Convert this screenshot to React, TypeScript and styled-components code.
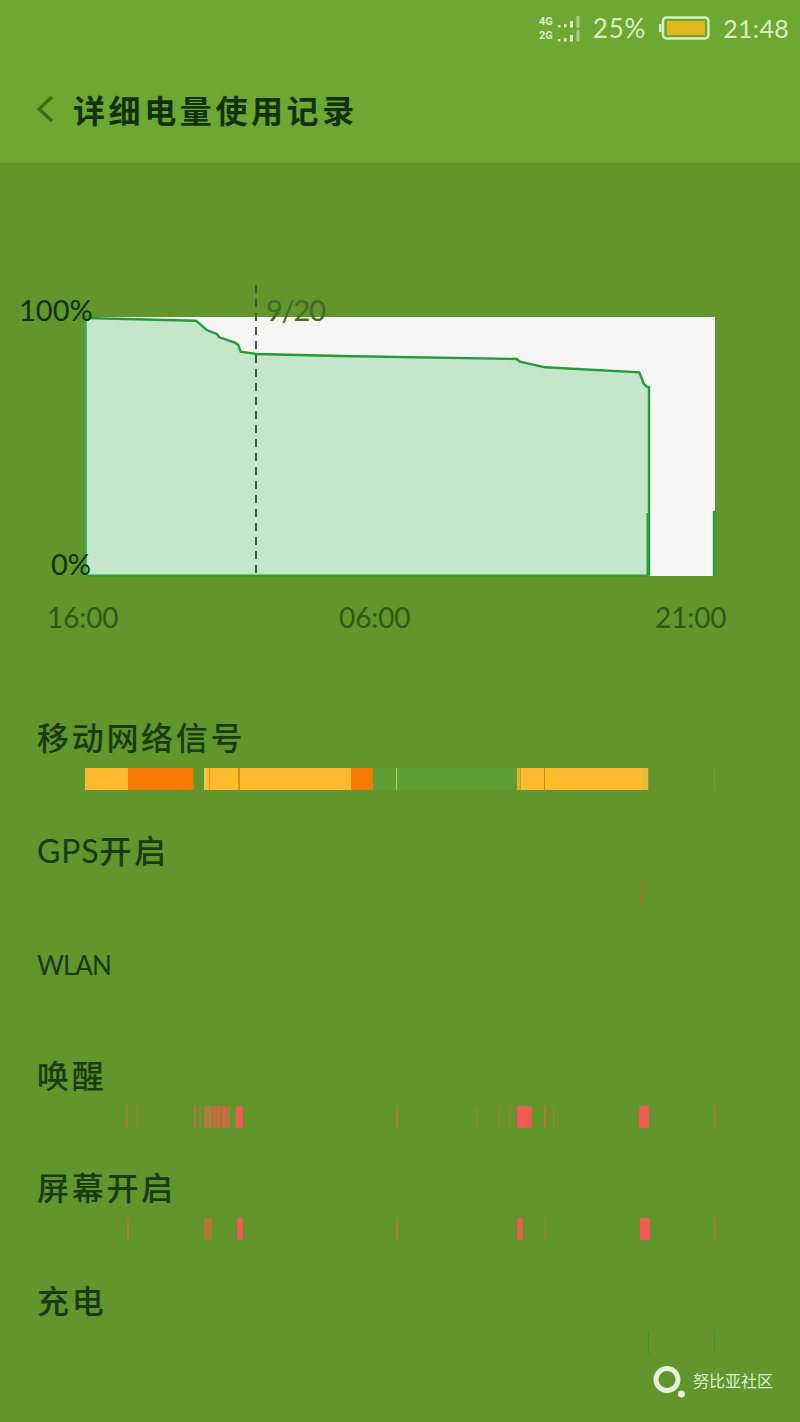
import React from 'react';
import styled, { createGlobalStyle } from 'styled-components';

const latin = '"Lato", "Noto Sans CJK SC", sans-serif';

const GlobalStyle = createGlobalStyle`
  html, body {
    margin: 0;
    padding: 0;
    background: #62952b;
  }
`;

const Page = styled.div`
  position: relative;
  width: 800px;
  height: 1422px;
  overflow: hidden;
  background: #62952b;
  font-family: ${latin};
`;

const Header = styled.header`
  height: 162px;
  background: #6ca832;
  border-bottom: 1px solid #669f2f;
  display: flex;
  flex-direction: column;
`;

const StatusBar = styled.div`
  height: 56px;
  display: flex;
  align-items: center;
  justify-content: flex-end;
  padding-right: 11px;
  color: #d9f0c2;
`;

const NetStack = styled.div`
  display: flex;
  flex-direction: column;
  gap: 1px;
  margin-right: 13px;
`;

const NetRow = styled.div`
  display: flex;
  align-items: flex-end;
  gap: 5px;
  height: 13px;
  font-size: 11px;
  font-weight: 700;
  line-height: 13px;
  font-family: "Roboto", sans-serif;
`;

const Percent = styled.span`
  font-size: 26px;
  letter-spacing: 0.8px;
  margin-right: 13px;
`;

const Clock = styled.span`
  font-size: 25px;
  letter-spacing: 0.3px;
`;

const TitleRow = styled.div`
  flex: 1;
  display: flex;
  align-items: center;
  padding-left: 35px;
`;

const Title = styled.h1`
  margin: 0 0 0 18px;
  font-family: "Noto Sans CJK SC", sans-serif;
  font-size: 32px;
  font-weight: 700;
  letter-spacing: 3.6px;
  line-height: 48px;
  color: #12320e;
`;

const ChartArea = styled.section`
  position: relative;
  padding-top: 107px;
`;

const ChartSvg = styled.svg`
  display: block;
  width: 800px;
  height: 310px;
`;

const AxisTag = styled.span<{ $left: number; $top: number; $muted?: boolean }>`
  position: absolute;
  left: ${(p) => p.$left}px;
  top: ${(p) => p.$top}px;
  font-size: 29px;
  line-height: 32px;
  letter-spacing: ${(p) => (p.$muted ? '-1.2px' : '0')};
  color: ${(p) => (p.$muted ? '#3f6b22' : '#12300c')};
`;

const TimeAxis = styled.div`
  display: grid;
  grid-template-columns: 292px 316px auto;
  padding: 19px 0 0 47px;
  font-size: 28px;
  line-height: 36px;
  letter-spacing: -0.1px;
  color: #2d5a13;
`;

const Rows = styled.div`
  display: flex;
  flex-direction: column;
  gap: 40.6px;
  margin-top: 83px;
`;

const Row = styled.div`
  display: flex;
  flex-direction: column;
`;

const RowLabel = styled.div`
  height: 50px;
  padding-left: 37px;
  font-family: "Noto Sans CJK SC", sans-serif;
  font-size: 32px;
  font-weight: 500;
  letter-spacing: 2.7px;
  line-height: 36px;
  color: #1a3a12;
`;

const LatinPart = styled.span<{ $narrow?: boolean }>`
  font-family: ${latin};
  font-weight: 400;
  font-size: ${(p) => (p.$narrow ? 26 : 32)}px;
  letter-spacing: ${(p) => (p.$narrow ? '-1px' : '0.8px')};
`;

const Track = styled.svg`
  display: block;
  width: 800px;
  height: 22px;
`;

const Watermark = styled.div`
  position: absolute;
  left: 653px;
  top: 1365px;
  display: flex;
  align-items: center;
  gap: 7px;
  color: #dcefcd;
  font-family: "Noto Sans CJK SC", sans-serif;
  font-size: 16px;
`;

const WatermarkText = styled.span`
  line-height: 30px;
  margin-top: -4px;
`;

type Seg = [number, number, string, number?];

const YELLOW = '#fdbb2d';
const ORANGE = '#f57c00';
const RED = '#f45a55';
const BROWN = '#b07a3c';
const LINE = '#2a9a3c';

const rows: { key: string; label: React.ReactNode; segs: Seg[] }[] = [
  {
    key: 'mobile',
    label: '移动网络信号',
    segs: [
      [85, 43, YELLOW],
      [128, 65.5, ORANGE],
      [204, 3, '#f3c648'],
      [207, 144, YELLOW],
      [209, 1, '#d99a1e'],
      [238, 2, '#c9961f'],
      [351, 22, ORANGE],
      [373, 144, '#5f9e35'],
      [396, 1, '#c9c24a'],
      [517, 131, YELLOW],
      [517, 3, '#d9b52e'],
      [520, 1, '#c9961f'],
      [544, 1, '#b98f24'],
      [642, 6, '#e4be3a'],
      [648, 1, '#a98a2a'],
      [714, 1, '#6fa03a'],
    ],
  },
  {
    key: 'gps',
    label: (
      <>
        <LatinPart>GPS</LatinPart>开启
      </>
    ),
    segs: [[641.5, 2, '#a8743a']],
  },
  { key: 'wlan', label: <LatinPart $narrow>WLAN</LatinPart>, segs: [] },
  {
    key: 'wake',
    label: '唤醒',
    segs: [
      [126, 2, BROWN, 0.8],
      [136, 1.5, BROWN, 0.7],
      [194, 2, BROWN],
      [199, 2, BROWN, 0.8],
      [204, 8, BROWN],
      [213, 3, '#c66a40'],
      [216.5, 4, '#dc6247'],
      [222, 5, '#dc6247'],
      [228, 2, BROWN],
      [236, 7, RED],
      [396, 2, BROWN],
      [475.5, 1.5, BROWN, 0.7],
      [499, 1.5, BROWN, 0.7],
      [509, 1.5, BROWN, 0.7],
      [517, 9, RED],
      [526, 6, '#e4604c'],
      [544, 2, BROWN],
      [553, 1.5, BROWN, 0.7],
      [639, 10, RED],
      [714, 1.5, BROWN, 0.7],
    ],
  },
  {
    key: 'screen',
    label: '屏幕开启',
    segs: [
      [127, 2, BROWN, 0.8],
      [204, 8, BROWN],
      [237, 6, '#e8604c'],
      [396, 2, BROWN],
      [517, 6, '#e4604c'],
      [544, 1.5, BROWN, 0.7],
      [640, 10, RED],
      [714, 1.5, BROWN, 0.7],
    ],
  },
  {
    key: 'charge',
    label: '充电',
    segs: [
      [648, 1, LINE],
      [714, 1, LINE],
    ],
  },
];

const curve =
  '85,318 196,320.7 204,327.7 206.7,330 216.7,334 219.3,337.3 235,342.7 238.3,345 240.7,351.7 256.7,354 340,356 516.7,359 520,361.7 545,367.3 639.3,372.3 644,384 646.7,386.7 649,387.3';

const BatteryChart = () => (
  <ChartSvg viewBox="0 270 800 310">
    <rect x="85" y="317" width="630" height="259" fill="#f5f5f5" />
    <polygon points={`${curve} 649,576 85,576`} fill="#c6e6cb" />
    <polyline points={`${curve} 649,575.5`} fill="none" stroke="#249a38" strokeWidth="2.4" />
    <path d="M85.5 318V576" stroke="#2fae4c" strokeWidth="2.6" />
    <path d="M85 575.5H649" stroke="#22a03a" strokeWidth="2" />
    <path d="M647.5 513V576" stroke="#22a03a" strokeWidth="2" />
    <path d="M714 511V576" stroke="#22a03a" strokeWidth="2.4" />
    <path d="M256 285V576" stroke="#3f5a38" strokeWidth="2" strokeDasharray="8 6" />
  </ChartSvg>
);

const SignalBars = () => (
  <svg width="22" height="13" viewBox="0 0 22 13">
    <rect x="0" y="10" width="2.5" height="2.5" fill="#d9f0c2" />
    <rect x="6" y="9" width="2.5" height="3.5" fill="#d9f0c2" />
    <rect x="12" y="6" width="3" height="6.5" fill="#d9f0c2" />
    <rect x="18.5" y="1" width="3" height="11.5" fill="#a8cf86" />
  </svg>
);

const Battery = () => (
  <svg width="51" height="24" viewBox="0 0 51 24" style={{ marginRight: 13 }}>
    <rect x="0" y="8" width="2.5" height="8" fill="#d9f0c2" />
    <rect x="4" y="1.5" width="45.5" height="21" rx="3.5" fill="none" stroke="#d9f0c2" strokeWidth="2.4" />
    <rect x="8" y="5" width="38" height="14" fill="#e2b91c" />
  </svg>
);

const BackIcon = () => (
  <svg width="20" height="30" viewBox="0 0 20 30">
    <path d="M17 3L4 15L17 27" fill="none" stroke="#3d6f10" strokeWidth="3.4" />
  </svg>
);

const Logo = () => (
  <svg width="33" height="33" viewBox="0 0 33 33">
    <circle cx="14" cy="14.5" r="11" fill="none" stroke="#e6f1da" strokeWidth="5" />
    <circle cx="28.5" cy="29" r="3.5" fill="#e6f1da" />
  </svg>
);

export default function App() {
  return (
    <Page>
      <GlobalStyle />
      <Header>
        <StatusBar>
          <NetStack>
            <NetRow>
              4G
              <SignalBars />
            </NetRow>
            <NetRow>
              2G
              <SignalBars />
            </NetRow>
          </NetStack>
          <Percent>25%</Percent>
          <Battery />
          <Clock>21:48</Clock>
        </StatusBar>
        <TitleRow>
          <BackIcon />
          <Title>详细电量使用记录</Title>
        </TitleRow>
      </Header>

      <ChartArea>
        <BatteryChart />
        <AxisTag $left={19} $top={131}>100%</AxisTag>
        <AxisTag $left={51} $top={385}>0%</AxisTag>
        <AxisTag $left={266} $top={131} $muted>9/20</AxisTag>
        <TimeAxis>
          <span>16:00</span>
          <span>06:00</span>
          <span>21:00</span>
        </TimeAxis>
      </ChartArea>

      <Rows>
        {rows.map((row) => (
          <Row key={row.key}>
            <RowLabel>{row.label}</RowLabel>
            <Track viewBox="0 0 800 22">
              {row.segs.map(([x, w, color, opacity], i) => (
                <rect key={i} x={x} y="0" width={w} height="22" fill={color} opacity={opacity ?? 1} />
              ))}
            </Track>
          </Row>
        ))}
      </Rows>

      <Watermark>
        <Logo />
        <WatermarkText>努比亚社区</WatermarkText>
      </Watermark>
    </Page>
  );
}
